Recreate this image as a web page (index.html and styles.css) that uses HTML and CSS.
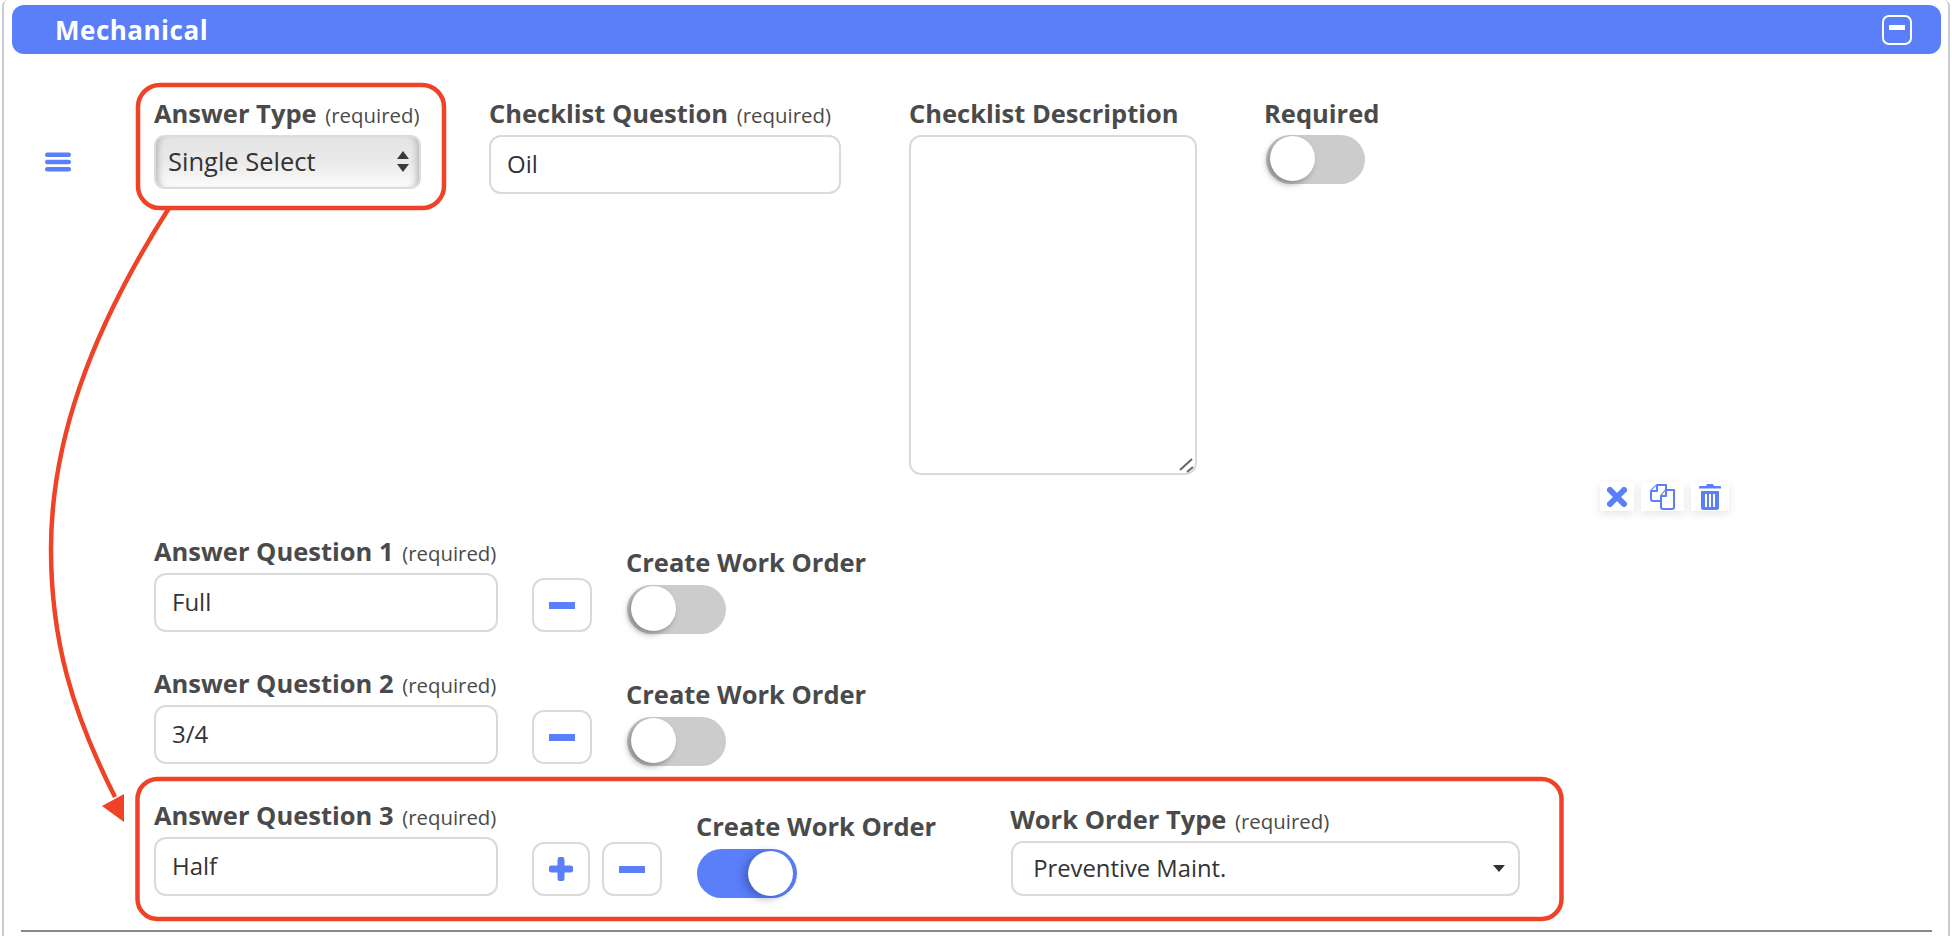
FILE: index.html
```html
<!DOCTYPE html>
<html lang="en">
<head>
<meta charset="utf-8">
<title>Mechanical</title>
<link rel="stylesheet" href="styles.css">
</head>
<body>
<div class="card">
  <header class="section-bar">
    <h2 class="section-title">Mechanical</h2>
    <svg class="collapse" viewBox="0 0 30 30" width="30" height="30"><rect x="1" y="1" width="28" height="28" rx="6" fill="none" stroke="#fff" stroke-width="2"/><rect x="7" y="10" width="16" height="5" fill="#fff"/></svg>
  </header>
  <div class="entry">
    <svg class="drag" viewBox="0 0 26 20" width="26" height="20"><rect y="0.5" width="26" height="4.6" rx="2.3"/><rect y="7.7" width="26" height="4.6" rx="2.3"/><rect y="14.9" width="26" height="4.6" rx="2.3"/></svg>
    <div class="main">
      <div class="top-row">
        <div class="field w-type">
          <label class="label">Answer Type <small>(required)</small></label>
          <div class="native-wrap">
            <select class="native"><option>Single Select</option></select>
            <svg class="updown" viewBox="0 0 12 24" width="12" height="24"><path d="M6 1l6 8H0zM0 14h12l-6 8z"/></svg>
          </div>
        </div>
        <div class="field w-question">
          <label class="label">Checklist Question <small>(required)</small></label>
          <input class="input" type="text" value="Oil">
        </div>
        <div class="field w-desc">
          <label class="label">Checklist Description</label>
          <div class="area-wrap">
            <textarea class="textarea"></textarea>
            <svg class="grip" viewBox="0 0 16 16" width="16" height="16"><path d="M2 13L14 2M9 15l6-5" stroke="#666" stroke-width="2" fill="none"/></svg>
          </div>
        </div>
        <div class="field">
          <label class="label label-req">Required</label>
          <div class="toggle toggle-req"><span class="knob"></span></div>
        </div>
      </div>

      <div class="answer-row first">
        <div class="field w-answer">
          <label class="label">Answer Question 1 <small>(required)</small></label>
          <input class="input" type="text" value="Full">
        </div>
        <div class="btns">
          <button class="sq" type="button"><span class="bar"></span></button>
        </div>
        <div class="field create">
          <label class="label">Create Work Order</label>
          <div class="toggle"><span class="knob"></span></div>
        </div>
      </div>

      <div class="answer-row">
        <div class="field w-answer">
          <label class="label">Answer Question 2 <small>(required)</small></label>
          <input class="input" type="text" value="3/4">
        </div>
        <div class="btns">
          <button class="sq" type="button"><span class="bar"></span></button>
        </div>
        <div class="field create">
          <label class="label">Create Work Order</label>
          <div class="toggle"><span class="knob"></span></div>
        </div>
      </div>

      <div class="answer-row">
        <div class="field w-answer">
          <label class="label">Answer Question 3 <small>(required)</small></label>
          <input class="input" type="text" value="Half">
        </div>
        <div class="btns">
          <button class="sq sq-plus" type="button"><svg viewBox="0 0 24 24" width="24" height="24"><path d="M12 3v18M3 12h18" stroke="#5a7ff9" stroke-width="7" stroke-linecap="round" fill="none"/></svg></button>
          <button class="sq" type="button"><span class="bar"></span></button>
        </div>
        <div class="field create create-on">
          <label class="label">Create Work Order</label>
          <div class="toggle on"><span class="knob"></span></div>
        </div>
        <div class="field w-order">
          <label class="label">Work Order Type <small>(required)</small></label>
          <div class="plain-wrap">
            <select class="plain"><option>Preventive Maint.</option></select>
            <svg class="caret" viewBox="0 0 12 7" width="12" height="7"><path d="M0 0h12L6 7z"/></svg>
          </div>
        </div>
      </div>
    </div>
    <div class="actions">
      <button class="act act-x" type="button"><svg viewBox="0 0 20 20" width="20" height="20"><path d="M3 3l14 14M17 3L3 17" stroke="#5a7ff9" stroke-width="6" stroke-linecap="round" fill="none"/></svg></button>
      <button class="act act-copy" type="button"><svg viewBox="0 0 26 26" width="26" height="26" fill="#fff" stroke="#5a7ff9" stroke-width="2" stroke-linejoin="round"><path d="M7 1h9v14a2 2 0 0 1-2 2H3a2 2 0 0 1-2-2V7z"/><path d="M7 1v6H1"/><path d="M16 6h8v17a2 2 0 0 1-2 2H13a2 2 0 0 1-2-2V12z"/><path d="M16 6v6h-5"/></svg></button>
      <button class="act act-trash" type="button"><svg viewBox="0 0 22 26" width="22" height="26"><path fill="#5a7ff9" d="M8 0h6l1 2h6a1 1 0 0 1 1 1v1.600H0V3a1 1 0 0 1 1-1h6zM2 7h18v16.500a2.500 2.500 0 0 1-2.500 2.500h-13A2.500 2.500 0 0 1 2 23.500z"/><path d="M7 10v13M11 10v13M15 10v13" stroke="#fff" stroke-width="2" fill="none"/></svg></button>
    </div>
  </div>
  <hr class="rule">
  <svg class="callouts" viewBox="0 0 1952 936" width="1952" height="936">
    <rect x="138" y="85" width="306" height="123" rx="22" class="mark"/>
    <rect x="137.500" y="779" width="1424" height="140" rx="20" class="mark"/>
    <path d="M169 208C88 335 51 445 51 549C51 640 72 712 115 797" class="mark"/>
    <path d="M102 806L124 794V822Z" fill="#ee4326"/>
  </svg>
</div>
</body>
</html>
```
FILE: styles.css
```css
* { box-sizing: border-box; }
html, body { margin: 0; height: 936px; overflow: hidden; background: #fff; }
body { font-family: "Open Sans", sans-serif; color: #4a4a4a; }

.card {
  position: relative;
  height: 936px;
  margin: 0 2px;
  padding-top: 5px;
  border-left: 2px solid #ccccd0;
  border-right: 2px solid #ccccd0;
  border-top-right-radius: 6px;
  border-top-left-radius: 6px;
}

.section-bar {
  display: flex;
  align-items: center;
  justify-content: space-between;
  height: 49px;
  margin: 0 7px 0 8px;
  padding: 0 29px 0 43px;
  background: #5a7ff9;
  border-radius: 12px;
}
.section-title { margin: 0; font-size: 26px; font-weight: 700; color: #fff; letter-spacing: 0.5px; }

.entry { display: flex; align-items: flex-start; padding: 44px 219px 0 41px; }
.drag { flex: none; margin-top: 54px; margin-right: 83px; fill: #5a7ff9; }
.main { flex: 1; min-width: 0; }

.top-row { display: flex; gap: 68px; }
.field { display: flex; flex-direction: column; }
.label { display: block; height: 30px; margin-bottom: 7px; font-size: 25.5px; line-height: 30px; font-weight: 700; color: #4a4a4a; white-space: nowrap; }
.label small { margin-left: 2px; font-size: 20.4px; font-weight: 400; }
.label-req { margin-left: -1px; }

.w-type { width: 267px; }
.w-question { width: 352px; }
.w-desc { width: 288px; }
.w-answer { width: 344px; margin-top: -1px; }
.w-order { width: 509px; margin-left: 75px; padding-top: 3px; }
.w-order .label { margin-left: -1px; }

.input, .textarea, .plain {
  display: block;
  width: 100%;
  border: 2px solid #dadada;
  border-radius: 12px;
  background: #fff;
  color: #333;
  outline: none;
}
.input { height: 59px; padding: 0 16px 2px; font: 400 24px "Open Sans", sans-serif; }
.area-wrap { position: relative; }
.textarea { height: 340px; resize: none; }
.grip { position: absolute; right: 3px; bottom: 2px; }

.native-wrap, .plain-wrap { position: relative; }
.native {
  display: block;
  width: 100%;
  height: 54px;
  padding: 0 12px 2px;
  appearance: none;
  border: 2px solid #dcdcdc;
  border-radius: 10px;
  background: linear-gradient(#e4e4e4, #eaeaea 50%, #fbfbfb);
  box-shadow: inset 7px 0 6px -5px #b4b4b4, inset -7px 0 6px -5px #b4b4b4;
  font: 400 25.5px "Open Sans", sans-serif;
  color: #333;
}
.updown { position: absolute; top: 15px; right: 12px; fill: #3a3a3a; pointer-events: none; }

.plain { height: 55px; padding: 0 20px 2px; appearance: none; font: 400 23.8px "Open Sans", sans-serif; }
.caret { position: absolute; top: 24px; right: 15px; fill: #333; pointer-events: none; }

.toggle {
  position: relative;
  width: 99px;
  height: 49px;
  border-radius: 25px;
  background: #ccc;
}
.toggle-req { margin-left: 1px; }
.knob {
  position: absolute;
  top: 1px;
  left: 4px;
  width: 45px;
  height: 45px;
  border-radius: 50%;
  background: #fff;
  box-shadow: -3px 3px 6px rgba(0, 0, 0, 0.35);
}
.toggle.on { width: 100px; background: #5a7ff9; }
.toggle.on .knob { left: auto; right: 4px; top: 2px; box-shadow: -4px 2px 8px rgba(40, 50, 120, 0.45); }

.answer-row { display: flex; align-items: flex-start; margin-top: 35px; }
.answer-row.first { margin-top: 62px; }
.btns { display: flex; gap: 12px; margin-left: 34px; padding-top: 41px; }
.sq {
  display: flex;
  align-items: center;
  justify-content: center;
  width: 60px;
  height: 54px;
  padding: 0;
  border: 2px solid #dadada;
  border-radius: 12px;
  background: #fff;
}
.sq-plus { width: 58px; }
.bar { display: block; width: 26px; height: 7px; background: #5a7ff9; }

.create { margin-left: 35px; padding-top: 10px; }
.create .label { margin-left: -1px; margin-bottom: 8px; }
.create-on { padding-top: 10px; }

.actions { flex: none; display: flex; gap: 7px; padding-top: 384px; margin-left: auto; }
.act {
  display: flex;
  align-items: center;
  justify-content: center;
  height: 29px;
  padding: 0;
  border: 0;
  background: #fff;
  box-shadow: 0 3px 10px rgba(0, 0, 0, 0.1);
}
.act-x { width: 34px; }
.act-copy { width: 43px; }
.act-trash { width: 38px; }

.rule { position: absolute; left: 17px; right: 16px; top: 930px; height: 2px; margin: 0; border: 0; background: #848a8e; }

.callouts { position: absolute; left: -4px; top: 0; pointer-events: none; }
.mark { fill: none; stroke: #ee4326; stroke-width: 4.500px; }
```
